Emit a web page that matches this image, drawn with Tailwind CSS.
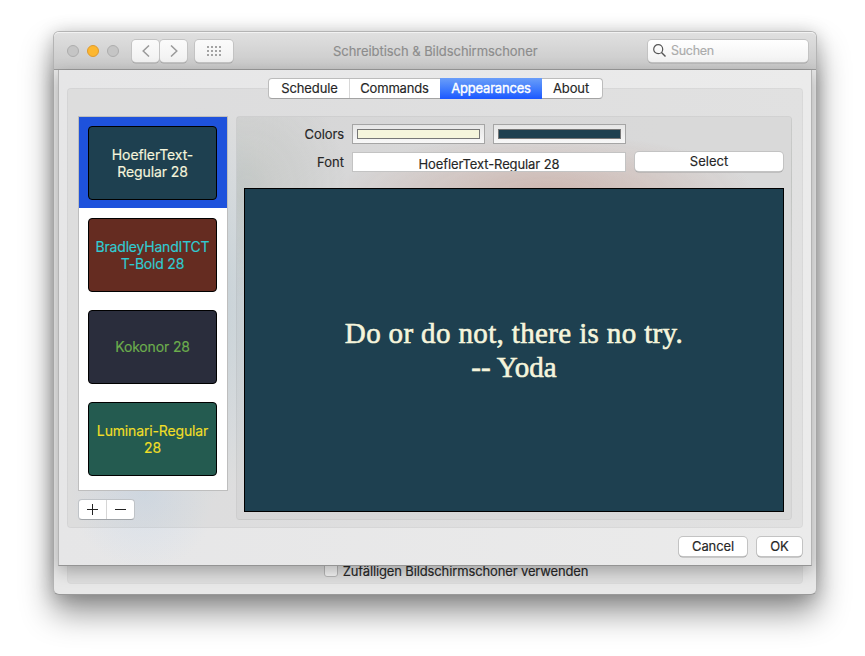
<!DOCTYPE html>
<html lang="de">
<head>
<meta charset="utf-8">
<title>Schreibtisch &amp; Bildschirmschoner</title>
<script src="https://cdn.jsdelivr.net/npm/@tailwindcss/browser@4"></script>
</head>
<body class="h-[656px] w-[865px] overflow-hidden bg-white pt-[31px] pl-[53px] font-['Inter','Liberation_Sans',sans-serif] text-[13px] leading-4 text-[#262626] [-webkit-text-stroke:0.15px_currentColor]">
<main class="relative flex h-[564px] w-[764px] flex-col rounded-[6px] border border-[#b4b4b4] border-b-[#999] bg-[#e8e8e8] shadow-[0_18px_32px_rgba(0,0,0,0.42),0_2px_18px_rgba(0,0,0,0.2)]">
  <header class="flex h-[38px] shrink-0 items-center rounded-t-[5px] border-t border-b border-t-[#f2f2f2] border-b-[#9b9b9b] bg-linear-to-b from-[#e0e0e0] to-[#c8c8c8] pr-[8px] pl-[13px]">
    <div class="flex gap-2">
      <span class="size-3 rounded-full border border-[#adadad] bg-[#c5c5c5]"></span>
      <span class="size-3 rounded-full border border-[#df9a2e] bg-[#fdb72f]"></span>
      <span class="size-3 rounded-full border border-[#adadad] bg-[#c5c5c5]"></span>
    </div>
    <div class="-mt-px ml-[13px] flex gap-px">
      <span class="flex h-[22px] w-[27px] items-center justify-center rounded-[4px] bg-linear-to-b from-[#fbfbfb] to-[#f1f1f1] shadow-[0_0_0_1px_#c3c3c3,0_1px_0_0.5px_#a5a5a5]"><svg class="h-3 w-2" viewBox="0 0 8 12" fill="none" stroke="#9a9a9a" stroke-width="1.5"><path d="M7 .5 1.2 6 7 11.5"/></svg></span>
      <span class="flex h-[22px] w-[27px] items-center justify-center rounded-[4px] bg-linear-to-b from-[#fbfbfb] to-[#f1f1f1] shadow-[0_0_0_1px_#c3c3c3,0_1px_0_0.5px_#a5a5a5]"><svg class="h-3 w-2" viewBox="0 0 8 12" fill="none" stroke="#9a9a9a" stroke-width="1.5"><path d="M1 .5 6.8 6 1 11.5"/></svg></span>
    </div>
    <span class="-mt-px ml-2 flex h-[22px] w-[38px] items-center justify-center rounded-[4px] bg-linear-to-b from-[#fbfbfb] to-[#f1f1f1] shadow-[0_0_0_1px_#c3c3c3,0_1px_0_0.5px_#a5a5a5]">
      <svg class="h-[10px] w-[14px]" viewBox="0 0 14 10" fill="#a3a3a3" shape-rendering="crispEdges"><path d="M0 0h2v2H0zM4 0h2v2H4zM8 0h2v2H8zM12 0h2v2h-2zM0 4h2v2H0zM4 4h2v2H4zM8 4h2v2H8zM12 4h2v2h-2zM0 8h2v2H0zM4 8h2v2H4zM8 8h2v2H8zM12 8h2v2h-2z"/></svg>
    </span>
    <h1 class="ml-[100px] w-[206px] whitespace-nowrap text-[#8c8c8c]"><span class="tracking-[-0.05px]">Schreibtisch &amp; Bildschirmschoner</span></h1>
    <div class="-mt-px ml-auto flex h-[22px] w-[160px] items-center rounded-[4px] bg-linear-to-b from-white to-[#f2f2f2] pl-[5px] shadow-[0_0_0_1px_#c3c3c3,0_1px_0_0.5px_#a5a5a5]">
      <svg class="size-[13px]" viewBox="0 0 13 13" fill="none" stroke="#555" stroke-width="1.2"><circle cx="5.2" cy="5.2" r="4.5"/><path d="m8.5 8.5 4 4" stroke-width="1.4"/></svg>
      <span class="ml-[5px] text-[12.5px] tracking-[-0.3px] text-[#ababab]">Suchen</span>
    </div>
  </header>

  <section class="mx-[13px] mb-[10px] flex flex-1 items-end justify-center rounded-[4px] border border-[#dadada] bg-[#dedede] pb-[4px]">
    <label class="ml-[42px] flex items-end gap-[5px]"><span class="mb-[2px] size-[14px] rounded-[3px] border border-[#b8b8b8] bg-[#f4f4f4]"></span><span class="tracking-[-0.13px] whitespace-nowrap">Zufälligen Bildschirmschoner verwenden</span></label>
  </section>

  <!-- Sheet sliding out of the title bar -->
  <div class="absolute top-[38px] left-[4px] h-[496px] w-[754px] overflow-visible border-x border-b border-[#b4b4b4] border-b-[#949494] bg-[#e9e9e9] bg-[radial-gradient(ellipse_75px_80px_at_85px_420px,rgba(190,212,238,.38),transparent),radial-gradient(ellipse_70px_200px_at_155px_230px,rgba(182,205,216,.5),transparent),linear-gradient(90deg,#e6e6e7,#ebebeb)] px-[8px] pt-[18px] shadow-[0_5px_15px_rgba(0,0,0,0.27)]">
    <div class="flex h-[440px] gap-[8px] rounded-[4px] border border-black/4 bg-black/4 pt-[27px] pr-[10px] pl-[10px]">
      <aside class="w-[150px]">
        <ul class="h-[375px] border border-[#bebebe] bg-white pr-px text-center text-[14px] leading-[17px]">
          <li class="-mr-px flex h-[91px] items-end bg-[#1e52dc] pb-[8px] pl-[9px]"><div class="flex h-[74px] w-[129px] items-center justify-center rounded-[4px] border border-black bg-[#1e4050] text-[#f5f5dc]"><p class="tracking-[-0.1px]">HoeflerText-<br>Regular 28</p></div></li>
          <li class="flex h-[92px] items-end pb-[8px] pl-[9px]"><div class="flex h-[74px] w-[129px] items-center justify-center rounded-[4px] border border-black bg-[#652c21] text-[#30cbd2]"><p class="tracking-[-0.2px] whitespace-nowrap">BradleyHandITCT<br>T-Bold 28</p></div></li>
          <li class="flex h-[92px] items-end pb-[8px] pl-[9px]"><div class="flex h-[74px] w-[129px] items-center justify-center rounded-[4px] border border-black bg-[#2a2d3c] pb-[2px] text-[#6cad4d]"><p class="tracking-[-0.15px]">Kokonor 28</p></div></li>
          <li class="flex h-[92px] items-end pb-[8px] pl-[9px]"><div class="flex h-[74px] w-[129px] items-center justify-center rounded-[4px] border border-black bg-[#245b50] text-[#f0df27]"><p class="tracking-[-0.15px] whitespace-nowrap">Luminari-Regular<br>28</p></div></li>
        </ul>
        <div class="mt-2 flex h-[21px] w-[57px] divide-x divide-[#d6d6d6] rounded-[4px] border border-[#bfc3c7] border-b-[#a0a4a8] bg-white">
          <span class="flex w-[28px] items-center justify-center"><svg class="size-[11px]" viewBox="0 0 11 11" stroke="#222" shape-rendering="crispEdges"><path d="M0 5.5h11M5.5 0v11"/></svg></span>
          <span class="flex flex-1 items-center justify-center"><svg class="size-[11px]" viewBox="0 0 11 11" stroke="#222" shape-rendering="crispEdges"><path d="M0 5.5h11"/></svg></span>
        </div>
      </aside>
      <section class="h-[404px] w-[556px] rounded-[4px] border border-black/4 bg-black/3 bg-[radial-gradient(ellipse_210px_60px_at_310px_77px,rgba(190,135,118,.42),transparent),radial-gradient(ellipse_100px_110px_at_10px_70px,rgba(170,178,170,.35),transparent)] px-[7px] pt-[7px]">
        <div class="flex h-[20px] items-center">
          <span class="w-[100px] text-right"><span class="tracking-[-0.1px]">Colors</span></span>
          <span class="ml-[8px] h-[20px] w-[133px] border border-[#a5a5a5] bg-linear-to-b from-[#e6e6e6] to-[#f8f8f8] p-[4px]"><span class="block h-full border border-[#777] bg-[#f5f5dc]"></span></span>
          <span class="ml-[8px] h-[20px] w-[133px] border border-[#a5a5a5] bg-linear-to-b from-[#e6e6e6] to-[#f8f8f8] p-[4px]"><span class="block h-full border border-[#777] bg-[#1e4050]"></span></span>
        </div>
        <div class="mt-[7px] flex h-[21px] items-center">
          <span class="w-[100px] text-right"><span>Font</span></span>
          <span class="mt-px ml-[8px] flex h-[20px] w-[274px] items-start justify-center overflow-hidden border border-[#c3c3c3] bg-white pt-[3px]"><span class="tracking-[-0.1px]">HoeflerText-Regular 28</span></span>
          <button class="ml-[9px] h-[19px] w-[148px] rounded-[4px] bg-white leading-[19px] shadow-[0_0_0_1px_#c3c3c3,0_1px_0_0.5px_#a5a5a5]"><span>Select</span></button>
        </div>
        <div class="mt-[16px] flex h-[324px] w-[540px] items-center justify-center border border-black bg-[#1e4050]">
          <p class="text-center font-['Liberation_Serif',serif] text-[29px] leading-[34px] whitespace-nowrap text-[#f5f5dc] [-webkit-text-stroke:0.6px_#f5f5dc]"><span class="tracking-[0.36px]">Do or do not, there is no try.</span><br>-- Yoda</p>
        </div>
      </section>
    </div>
    <div class="mt-[9px] flex justify-end gap-[10px] pr-px">
      <button class="h-[19px] w-[68px] rounded-[4px] bg-white leading-[19px] shadow-[0_0_0_1px_#c3c3c3,0_1px_0_0.5px_#a5a5a5]"><span class="tracking-[-0.1px]">Cancel</span></button>
      <button class="h-[19px] w-[45px] rounded-[4px] bg-white leading-[19px] shadow-[0_0_0_1px_#c3c3c3,0_1px_0_0.5px_#a5a5a5]"><span>OK</span></button>
    </div>
    <!-- Tabs straddle the group box edge -->
    <nav class="absolute top-[8px] left-[209px] flex h-[21px] w-[335px] rounded-[4px] border border-[#bcbcbc] border-b-[#a3a3a3] bg-white text-center leading-[19px]">
      <span class="w-[81px] border-r border-[#d8d8d8] pl-px"><span class="tracking-[-0.1px]">Schedule</span></span>
      <span class="w-[90px] pr-px"><span class="tracking-[-0.15px]">Commands</span></span>
      <span class="-my-px w-[102px] bg-linear-to-b from-[#6a9df8] to-[#1c56ff] leading-[21px] text-white [-webkit-text-stroke:0.35px_white]"><span class="tracking-[-0.2px]">Appearances</span></span>
      <span class="flex-1 pr-[2px]"><span class="tracking-[-0.1px]">About</span></span>
    </nav>
  </div>
</main>
</body>
</html>
